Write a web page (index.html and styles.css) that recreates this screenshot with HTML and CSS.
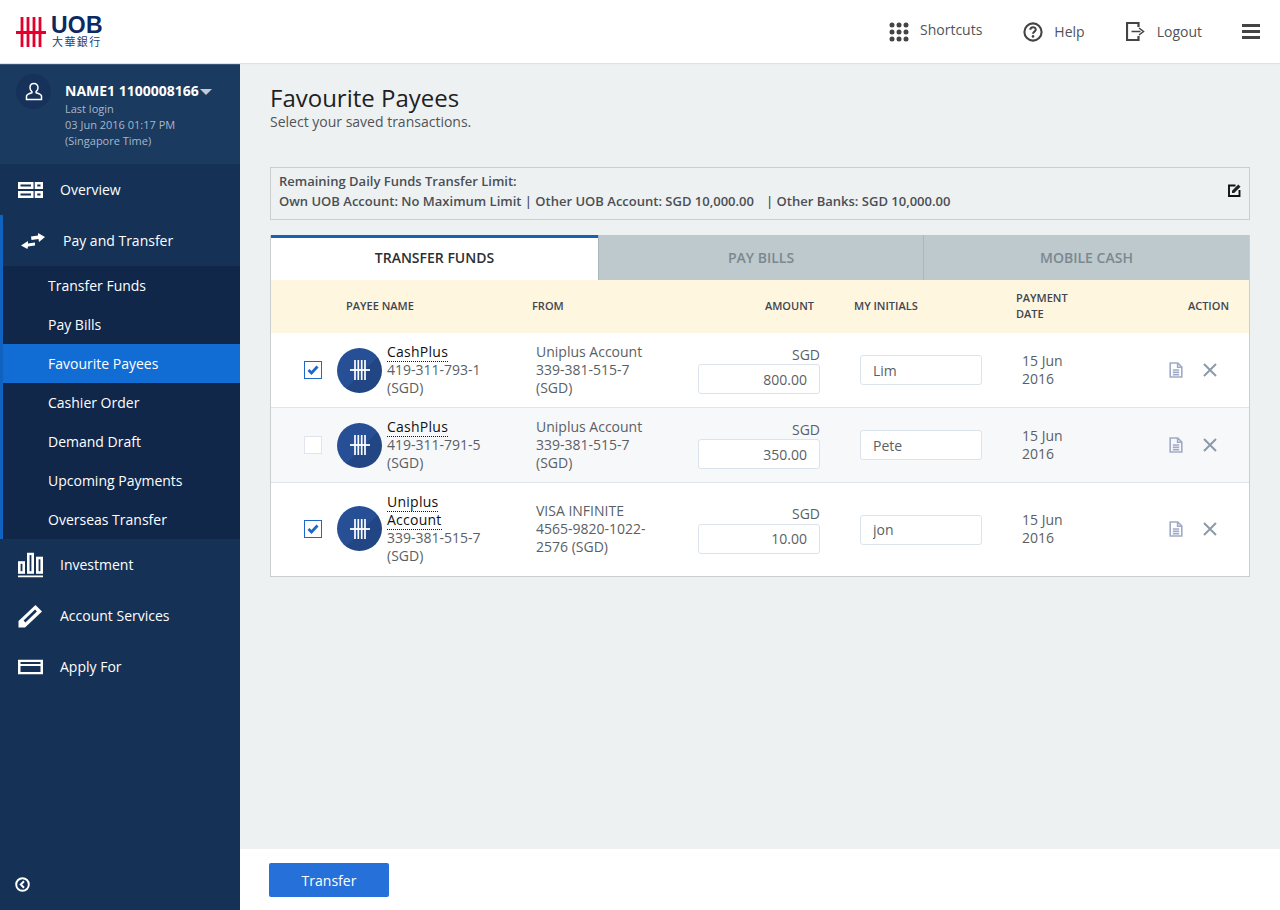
FILE: index.html
```html
<!DOCTYPE html>
<html lang="en">
<head>
<meta charset="utf-8">
<title>Favourite Payees</title>
<link rel="stylesheet" href="styles.css">
</head>
<body>
<svg class="sprite" width="0" height="0" aria-hidden="true">
  <symbol id="bars" viewBox="0 0 24 24">
    <path d="M7 2v20M10.300 2v20M13.700 2v20M17 2v20" stroke="#fff" stroke-width="1.700" fill="none"/>
    <path d="M2 12h20" stroke="#fff" stroke-width="1.800" fill="none"/>
  </symbol>
  <symbol id="doc" viewBox="0 0 14 16">
    <path d="M1.200 1h7.600l4 4v10H1.200z M8.600 1v4.200h4.200 M3.800 8h6.400M3.800 10.300h6.400M3.800 12.600h6.400" fill="none" stroke="#a0aac6" stroke-width="1.600"/>
  </symbol>
  <symbol id="cross" viewBox="0 0 14 14">
    <path d="M1 1l12 12M13 1L1 13" fill="none" stroke="#8c9aa8" stroke-width="2"/>
  </symbol>
  <symbol id="tick" viewBox="0 0 12 10">
    <path d="M1.500 5l3 3 6-6.500" fill="none" stroke="#1f68c9" stroke-width="2.800"/>
  </symbol>
</svg>

<header class="topbar">
  <div class="logo">
    <svg class="logo-mark" width="30" height="30" viewBox="0 0 30 30">
      <path d="M6 0v30M12 0v30M18 0v30M24 0v30" stroke="#e4002b" stroke-width="2.800" fill="none"/>
      <path d="M0 15.500h30" stroke="#e4002b" stroke-width="3" fill="none"/>
    </svg>
    <div class="logo-text">
      <span class="logo-uob">UOB</span>
      <span class="logo-cjk">大華銀行</span>
    </div>
  </div>
  <nav class="top-nav">
    <a class="top-link top-link-shortcuts">
      <svg width="20" height="20" viewBox="0 0 20 20" fill="#444">
        <circle cx="3" cy="3" r="2.500"/><circle cx="10" cy="3" r="2.500"/><circle cx="17" cy="3" r="2.500"/>
        <circle cx="3" cy="10" r="2.500"/><circle cx="10" cy="10" r="2.500"/><circle cx="17" cy="10" r="2.500"/>
        <circle cx="3" cy="17" r="2.500"/><circle cx="10" cy="17" r="2.500"/><circle cx="17" cy="17" r="2.500"/>
      </svg>
      <span>Shortcuts</span>
    </a>
    <a class="top-link top-link-help">
      <svg width="20" height="20" viewBox="0 0 20 20">
        <circle cx="10" cy="10" r="8.600" fill="none" stroke="#444" stroke-width="2.100"/>
        <path d="M7.300 7.700c0-3.400 5.500-3.400 5.500-.1 0 2-2.800 2-2.800 4.100" fill="none" stroke="#444" stroke-width="2"/>
        <circle cx="10" cy="14.400" r="1.300" fill="#444"/>
      </svg>
      <span>Help</span>
    </a>
    <a class="top-link top-link-logout">
      <svg width="19" height="19" viewBox="0 0 19 19">
        <path d="M12.500 5V1H1v17h11.500v-4" fill="none" stroke="#444" stroke-width="2.200"/>
        <path d="M5.500 9.500h9M13 6l4.500 3.500L13 13" fill="none" stroke="#444" stroke-width="1.500"/>
      </svg>
      <span>Logout</span>
    </a>
    <button class="menu-btn" aria-label="Menu"><i></i><i></i><i></i></button>
  </nav>
</header>

<div class="shell">
  <aside class="sidebar">
    <section class="profile">
      <div class="avatar">
        <svg width="18" height="20" viewBox="0 0 18 20">
          <path d="M9 1.500c-2.500 0-4 1.900-4 4.200 0 1.700.8 3 1.900 3.900v1.200c-2.400.7-5 1.500-5.400 3.100v3.600h15v-3.600c-.4-1.600-3-2.400-5.400-3.100V9.600c1.100-.9 1.900-2.200 1.900-3.900 0-2.300-1.500-4.200-4-4.200z" fill="none" stroke="#fff" stroke-width="1.500"/>
        </svg>
      </div>
      <div class="profile-info">
        <div class="profile-name">NAME1 1100008166<i class="caret"></i></div>
        <div class="profile-meta">Last login</div>
        <div class="profile-meta">03 Jun 2016 01:17 PM</div>
        <div class="profile-meta">(Singapore Time)</div>
      </div>
    </section>

    <a class="nav-item">
      <svg class="nav-icon" width="25" height="16" viewBox="0 0 25 16" fill="none" stroke="#fff" stroke-width="2.500">
        <rect x="1.250" y="1.250" width="13" height="4.500"/><rect x="1.250" y="10.250" width="13" height="4.500"/>
        <rect x="18" y="1.250" width="5.750" height="4.500"/><rect x="18" y="10.250" width="5.750" height="4.500"/>
      </svg>
      <span>Overview</span>
    </a>
    <div class="nav-group">
      <a class="nav-item nav-item-open">
        <svg class="nav-icon" width="24" height="16" viewBox="0 0 24 16" fill="#fff">
          <path d="M10 3.500l7-1V0l7 4-6 5-.5-3-7 1z"/>
          <path d="M14 9.500l-7 1V8l-7 4.500L6.500 16l.5-2.500 7-1z"/>
        </svg>
        <span>Pay and Transfer</span>
      </a>
      <ul class="subnav">
        <li>Transfer Funds</li>
        <li>Pay Bills</li>
        <li class="active">Favourite Payees</li>
        <li>Cashier Order</li>
        <li>Demand Draft</li>
        <li>Upcoming Payments</li>
        <li>Overseas Transfer</li>
      </ul>
    </div>
    <a class="nav-item">
      <svg class="nav-icon" width="25" height="25" viewBox="0 0 25 25" fill="none" stroke="#fff" stroke-width="2.600">
        <rect x="1.300" y="10" width="4.400" height="10"/><rect x="10.300" y="1.300" width="4.400" height="18.700"/><rect x="19.300" y="5.500" width="4.400" height="14.500"/>
        <path d="M0 24h25" stroke-width="2.200"/>
      </svg>
      <span>Investment</span>
    </a>
    <a class="nav-item">
      <svg class="nav-icon" width="25" height="24" viewBox="0 0 25 24">
        <path d="M0.500 23.500v-6.500L17.500 1l6.500 6.500L7 23.500z" fill="#fff"/>
        <path d="M6.500 17.500L18 6.500" stroke="#153156" stroke-width="2.600"/>
      </svg>
      <span>Account Services</span>
    </a>
    <a class="nav-item">
      <svg class="nav-icon" width="25" height="15" viewBox="0 0 25 15" fill="none" stroke="#fff">
        <rect x="1.250" y="1.250" width="22.500" height="12.500" stroke-width="2.500"/>
        <path d="M1 5.500h23" stroke-width="2.200"/>
      </svg>
      <span>Apply For</span>
    </a>

    <button class="collapse" aria-label="Collapse">
      <svg width="15" height="15" viewBox="0 0 15 15" fill="none" stroke="#fff" stroke-width="2">
        <circle cx="7.500" cy="7.500" r="6.300"/><path d="M9 4.300L5.800 7.500 9 10.700"/>
      </svg>
    </button>
  </aside>

  <main class="main">
    <div class="content">
      <h1 class="title">Favourite Payees</h1>
      <p class="subtitle">Select your saved transactions.</p>

      <section class="limit">
        <div class="limit-text">
          <div>Remaining Daily Funds Transfer Limit:</div>
          <div>Own UOB Account: No Maximum Limit | Other UOB Account: SGD 10,000.00 &nbsp;&nbsp;<span class="limit-last">| Other Banks: SGD 10,000.00</span></div>
        </div>
        <svg class="limit-edit" width="13" height="13" viewBox="0 0 13 13" fill="none">
          <path d="M7.500 1.500H1v10.500h10.500V6" stroke="#111" stroke-width="1.900"/>
          <path d="M4 9V6.800L10.300.5l2.200 2.200L6.200 9z" fill="#222"/>
        </svg>
      </section>

      <section class="panel">
        <div class="tabs">
          <div class="tab tab-active">TRANSFER FUNDS</div>
          <div class="tab tab-mid">PAY BILLS</div>
          <div class="tab">MOBILE CASH</div>
        </div>

        <div class="row row-head">
          <div></div>
          <div class="h-payee">PAYEE NAME</div>
          <div>FROM</div>
          <div class="h-amount">AMOUNT</div>
          <div class="h-initials">MY INITIALS</div>
          <div>PAYMENT<br>DATE</div>
          <div class="h-action">ACTION</div>
        </div>

        <div class="row">
          <div class="c-check"><span class="check checked"><svg width="12" height="10"><use href="#tick"/></svg></span></div>
          <div class="c-payee">
            <span class="badge"><svg width="24" height="24"><use href="#bars"/></svg></span>
            <div class="payee-text"><b>CashPlus</b><br>419-311-793-1<br>(SGD)</div>
          </div>
          <div class="c-from">Uniplus Account<br>339-381-515-7<br>(SGD)</div>
          <div class="c-amount"><span class="cur">SGD</span><input class="field field-right" value="800.00"></div>
          <div class="c-initials"><input class="field" value="Lim"></div>
          <div class="c-date">15 Jun<br>2016</div>
          <div class="c-action"><svg width="14" height="16"><use href="#doc"/></svg><svg width="14" height="14"><use href="#cross"/></svg></div>
        </div>

        <div class="row row-alt">
          <div class="c-check"><span class="check"></span></div>
          <div class="c-payee">
            <span class="badge"><svg width="24" height="24"><use href="#bars"/></svg></span>
            <div class="payee-text"><b>CashPlus</b><br>419-311-791-5<br>(SGD)</div>
          </div>
          <div class="c-from">Uniplus Account<br>339-381-515-7<br>(SGD)</div>
          <div class="c-amount"><span class="cur">SGD</span><input class="field field-right" value="350.00"></div>
          <div class="c-initials"><input class="field" value="Pete"></div>
          <div class="c-date">15 Jun<br>2016</div>
          <div class="c-action"><svg width="14" height="16"><use href="#doc"/></svg><svg width="14" height="14"><use href="#cross"/></svg></div>
        </div>

        <div class="row row-tall">
          <div class="c-check"><span class="check checked"><svg width="12" height="10"><use href="#tick"/></svg></span></div>
          <div class="c-payee">
            <span class="badge"><svg width="24" height="24"><use href="#bars"/></svg></span>
            <div class="payee-text"><b>Uniplus</b><br><b>Account</b><br>339-381-515-7<br>(SGD)</div>
          </div>
          <div class="c-from">VISA INFINITE<br>4565-9820-1022-<br>2576 (SGD)</div>
          <div class="c-amount"><span class="cur">SGD</span><input class="field field-right" value="10.00"></div>
          <div class="c-initials"><input class="field" value="jon"></div>
          <div class="c-date">15 Jun<br>2016</div>
          <div class="c-action"><svg width="14" height="16"><use href="#doc"/></svg><svg width="14" height="14"><use href="#cross"/></svg></div>
        </div>
      </section>
    </div>
    <footer class="footer"><button class="btn">Transfer</button></footer>
  </main>
</div>
</body>
</html>
```
FILE: styles.css
```css
* { box-sizing: border-box; }
html, body { margin: 0; height: 100%; }
body { font-family: "Open Sans", "Noto Sans CJK TC", sans-serif; font-size: 14px; color: #4a4f55; overflow: hidden; }
.sprite { position: absolute; }
a { color: inherit; text-decoration: none; }

.topbar { height: 63px; display: flex; align-items: center; justify-content: space-between; background: #fff; box-shadow: 0 1px 1px #dfe2e4; position: relative; z-index: 2; }
.logo { display: flex; align-items: center; padding-left: 16px; gap: 5px; }
.logo-text { display: flex; flex-direction: column; color: #0b2a63; }
.logo-uob { font-family: "Liberation Sans", sans-serif; font-weight: 700; font-size: 23px; line-height: 19px; letter-spacing: .2px; }
.logo-cjk { font-size: 11px; line-height: 12px; margin: 1px 0 0 1px; letter-spacing: 1.400px; color: #24406f; }
.top-nav { display: flex; align-items: center; height: 100%; padding-right: 20px; }
.top-link { display: flex; align-items: center; font-size: 14px; color: #4f5459; }
.top-link-shortcuts { gap: 11px; margin-right: 41px; }
.top-link-shortcuts span { position: relative; top: -2px; }
.top-link-help { gap: 11px; margin-right: 41px; }
.top-link-logout { gap: 12px; margin-right: 40px; }
.menu-btn { width: 18px; height: 15px; padding: 0; border: 0; background: none; display: flex; flex-direction: column; justify-content: space-between; }
.menu-btn i { display: block; height: 3px; background: #444; }

.shell { display: flex; height: 847px; }
.sidebar { width: 240px; flex: none; background: #153156; color: #fff; position: relative; }
.profile { height: 101px; background: #1a3a60; display: flex; padding: 11px 0 0 16px; }
.avatar { width: 35px; height: 35px; border-radius: 50%; background: #17325a; display: flex; align-items: center; justify-content: center; flex: none; }
.profile-info { padding: 7px 0 0 14px; }
.profile-name { font-size: 14px; font-weight: 700; line-height: 20px; display: flex; align-items: center; }
.caret { display: inline-block; margin: 1px 0 0 1px; border: 6px solid transparent; border-top: 6px solid #c3cad4; border-bottom: 0; }
.profile-meta { font-size: 11px; line-height: 16px; color: #a9b6c8; }

.nav-item { height: 51px; display: flex; align-items: center; position: relative; font-size: 14px; padding-left: 60px; }
.nav-icon { position: absolute; left: 18px; top: 50%; transform: translateY(-50%); }
.nav-group { border-left: 3px solid #0f62c0; }
.subnav { list-style: none; margin: 0; padding: 0; background: #10274a; }
.subnav li { height: 39px; line-height: 39px; padding-left: 45px; font-size: 14px; }
.subnav .active { background: #116cd4; }
.collapse { position: absolute; left: 15px; bottom: 18px; width: 15px; height: 15px; padding: 0; border: 0; background: none; display: flex; }

.main { flex: 1; display: flex; flex-direction: column; background: #eef1f2; min-width: 0; }
.content { flex: 1; padding: 19px 30px 0; }
.title { margin: 0; font-size: 24px; font-weight: 400; line-height: 32px; color: #1e2124; }
.subtitle { margin: -2px 0 0; font-size: 14px; line-height: 20px; color: #4f5459; }

.limit { margin-top: 35px; height: 53px; border: 1px solid #c9ced1; padding: 3px 8px; display: flex; justify-content: space-between; align-items: flex-start; font-size: 13px; font-weight: 600; line-height: 20px; color: #4a4f55; }
.limit-last { margin-left: 2px; }
.limit-edit { margin-top: 13px; }

.panel { margin-top: 15px; border: 1px solid #c9ced1; border-top: 0; background: #fff; }
.tabs { display: flex; height: 45px; background: #bdc9cd; }
.tab { flex: 1; display: flex; align-items: center; justify-content: center; font-size: 14px; font-weight: 600; color: #7b8890; border-left: 1px solid #a9b6ba; }
.tab:first-child { flex: none; width: 327px; border-left: 0; }
.tab-mid { flex: none; width: 325px; }
.tab-active { background: #fff; color: #2c2f33; border-top: 3px solid #1a5fb4; padding-bottom: 3px; }

.row { display: grid; grid-template-columns: 66px 195px 166px 122px 196px 134px 1fr; align-items: center; height: 75px; border-bottom: 1px solid #e1e5e8; background: #fff; font-size: 14px; line-height: 18px; color: #5a5f66; }
.row-alt { background: #f7f8fa; }
.row-tall { height: 93px; border-bottom: 0; padding-bottom: 2px; }
.row-head { height: 53px; padding-bottom: 2px; background: #fff6e0; border-bottom: 0; font-size: 11px; font-weight: 600; line-height: 16px; color: #3e4650; }
.h-payee { padding-left: 9px; }
.h-amount { text-align: right; padding-right: 6px; }
.h-initials { padding-left: 34px; }
.h-action { text-align: right; padding-right: 20px; }

.c-check { padding-left: 33px; display: flex; }
.check { width: 18px; height: 18px; border: 1px solid #1f68c9; background: #fff; display: flex; align-items: center; justify-content: center; }
.check:not(.checked) { border-color: #dfe4ee; }
.c-payee { display: flex; align-items: center; gap: 5px; }
.badge { width: 45px; height: 45px; flex: none; border-radius: 50%; background: linear-gradient(135deg, #274f96 55%, #224684 55%); display: flex; align-items: center; justify-content: center; }
.payee-text b { font-weight: 400; letter-spacing: .25px; color: #0e1013; border-bottom: 1px dotted #14171a; }
.c-from { padding-left: 4px; }
.c-amount { display: flex; flex-direction: column; align-items: flex-end; }
.cur { line-height: 18px; }
.field { width: 122px; height: 30px; border: 1px solid #dbe3ec; border-radius: 3px; padding: 0 12px; font: inherit; color: #5a5f66; background: #fff; outline: 0; }
.field-right { text-align: right; }
.c-initials { padding-left: 40px; }
.row-tall .c-initials { padding-top: 2px; }
.row-tall .c-amount { padding-top: 1px; }
.row-tall .cur { margin-bottom: 1px; }
.c-date { padding-left: 6px; }
.c-action { display: flex; align-items: center; gap: 20px; padding-left: 19px; }

.footer { height: 61px; flex: none; background: #fff; padding: 14px 29px; }
.btn { width: 120px; height: 34px; border: 0; border-radius: 2px; background: #2670d9; color: #fff; font: inherit; font-size: 14px; }
```
